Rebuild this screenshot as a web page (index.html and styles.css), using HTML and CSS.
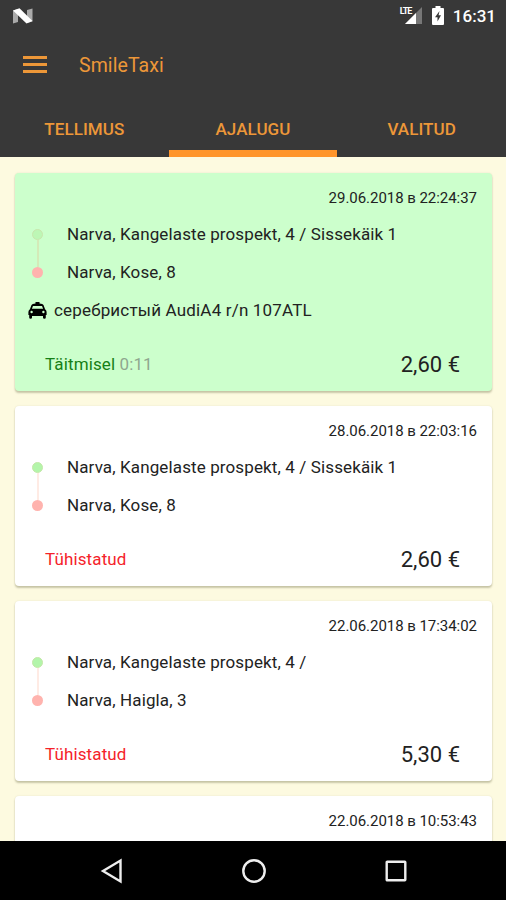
FILE: index.html
```html
<!DOCTYPE html>
<html lang="et">
<head>
<meta charset="utf-8">
<title>SmileTaxi</title>
<link rel="stylesheet" href="styles.css">
</head>
<body>
<div class="screen">
  <header class="header">
    <div class="status-bar">
      <svg class="nougat" width="20" height="16" viewBox="0 0 20 16"><path fill="#aaa" d="M0 2.500 5 1v13l-5 1.500zM14 2l5.500-1.500v13L14 15z"/><path fill="#fff" d="M0 2.500 6.500.3 19.500 13l-6 2.500z"/></svg>
      <div class="signal">
        <svg width="22" height="19" viewBox="0 0 22 19"><path fill="#777" d="M22 1v17H5z"/><path fill="#fff" d="M16 7v11H5z"/></svg>
        <span class="lte">LTE</span>
      </div>
      <svg class="battery" width="12" height="19" viewBox="0 0 12 19"><path fill="#fff" d="M3.500 0h5v2H11q1 0 1 1v15q0 1-1 1H1q-1 0-1-1V3q0-1 1-1h2.500z"/><path fill="#383838" d="M7.500 5 3 11.300h2.500V15.500L9 9.300H6.600z"/></svg>
      <span class="clock">16:31</span>
    </div>
    <div class="toolbar">
      <div class="menu"><i></i><i></i><i></i></div>
      <h1 class="title">SmileTaxi</h1>
    </div>
    <nav class="tabs">
      <span class="tab">TELLIMUS</span>
      <span class="tab active">AJALUGU</span>
      <span class="tab">VALITUD</span>
    </nav>
  </header>
  <main class="list">
    <article class="card current">
      <div class="date">29.06.2018 в 22:24:37</div>
      <div class="route">
        <div class="track"><i class="dot from"></i><i class="line"></i><i class="dot to"></i></div>
        <div class="stops"><div class="stop">Narva, Kangelaste prospekt, 4 / Sissekäik 1</div><div class="stop">Narva, Kose, 8</div></div>
      </div>
      <div class="car">
        <svg width="19" height="17" viewBox="0 0 19 17"><path fill="#000" fill-rule="evenodd" d="M7.500 0h4v1.500q3.500.2 4 1.500l1.600 4.300q1.500.9 1.500 2.700V13h-.8v2.500q0 1.200-1.400 1.200T15 15.500V14H4v1.500q0 1.200-1.400 1.200t-1.400-1.200V13H.4v-3q0-1.800 1.500-2.700L3.500 3q.5-1.300 4-1.500zM5 4 3.900 6.800h11.200L14 4zM3.600 8.800a1.200 1.200 0 1 0 0 2.400 1.200 1.200 0 1 0 0-2.400M15.400 8.800a1.200 1.200 0 1 0 0 2.400 1.200 1.200 0 1 0 0-2.400"/></svg>
        <span>серебристый AudiA4 r/n 107ATL</span>
      </div>
      <div class="summary"><span class="state running">Täitmisel <span class="timer">0:11</span></span><span class="price">2,60 €</span></div>
    </article>
    <article class="card">
      <div class="date">28.06.2018 в 22:03:16</div>
      <div class="route">
        <div class="track"><i class="dot from"></i><i class="line"></i><i class="dot to"></i></div>
        <div class="stops"><div class="stop">Narva, Kangelaste prospekt, 4 / Sissekäik 1</div><div class="stop">Narva, Kose, 8</div></div>
      </div>
      <div class="summary"><span class="state cancelled">Tühistatud</span><span class="price">2,60 €</span></div>
    </article>
    <article class="card">
      <div class="date">22.06.2018 в 17:34:02</div>
      <div class="route">
        <div class="track"><i class="dot from"></i><i class="line"></i><i class="dot to"></i></div>
        <div class="stops"><div class="stop">Narva, Kangelaste prospekt, 4 /</div><div class="stop">Narva, Haigla, 3</div></div>
      </div>
      <div class="summary"><span class="state cancelled">Tühistatud</span><span class="price">5,30 €</span></div>
    </article>
    <article class="card">
      <div class="date">22.06.2018 в 10:53:43</div>
    </article>
  </main>
  <footer class="navbar">
    <svg width="24" height="26" viewBox="0 0 24 26"><path d="M20.500 2.500v21L3 13z"/></svg>
    <svg width="26" height="26" viewBox="0 0 26 26"><circle cx="13" cy="13" r="10.700"/></svg>
    <svg width="24" height="26" viewBox="0 0 24 26"><rect x="2.700" y="3.700" width="18.600" height="18.600" rx=".5"/></svg>
  </footer>
</div>
</body>
</html>
```

FILE: styles.css
```css
* { box-sizing: border-box; }

body {
  margin: 0;
  font-family: Roboto, "Liberation Sans", sans-serif;
}

.screen {
  display: flex;
  flex-direction: column;
  width: 506px;
  height: 900px;
  overflow: hidden;
  background: #fdfae0;
}

.header {
  flex: none;
  height: 157px;
  background: #383838;
  color: #ed9738;
}

.status-bar {
  display: flex;
  align-items: center;
  height: 31px;
  padding: 0 10px 0 13px;
  color: #fff;
}

.signal {
  position: relative;
  height: 19px;
  margin-left: auto;
}

.lte {
  position: absolute;
  left: 0;
  top: 0;
  font-size: 9px;
  font-weight: 700;
  line-height: 10px;
  letter-spacing: -1px;
}

.battery { margin-left: 10px; }

.clock {
  margin-left: 9px;
  font-size: 17px;
  font-weight: 500;
}

.toolbar {
  display: flex;
  align-items: center;
  height: 69px;
  padding-left: 23px;
}

.menu {
  display: flex;
  flex-direction: column;
  gap: 4px;
  width: 24px;
  margin-top: -3px;
}

.menu i {
  height: 3px;
  background: #ed9738;
}

.title {
  margin: 0 0 0 32px;
  font-size: 19.500px;
  font-weight: 400;
  letter-spacing: .08px;
}

.tabs {
  display: grid;
  grid-template-columns: repeat(3, 1fr);
  height: 57px;
}

.tab {
  border-bottom: 7px solid transparent;
  font-size: 17px;
  font-weight: 500;
  letter-spacing: .08px;
  line-height: 58px;
  height: 57px;
  text-align: center;
}

.tab.active { border-color: #ff952b; }

.list {
  flex: 1;
  display: flex;
  flex-direction: column;
  gap: 14.900px;
  min-height: 0;
  padding: 16px 14px 0 15px;
  overflow: hidden;
}

.card {
  flex: none;
  height: 180px;
  border-radius: 4px;
  background: #fff;
  box-shadow: 0 2px 2px rgba(70, 70, 30, .28), 0 0 2px rgba(70, 70, 30, .12);
  color: #222;
}

.card.current {
  height: 218px;
  background: #cfc;
}

.date {
  height: 43px;
  padding: 16px 15px 0 0;
  font-size: 15px;
  letter-spacing: -.04px;
  line-height: 18px;
  text-align: right;
}

.route {
  display: flex;
  height: 76px;
  padding-left: 17px;
}

.track {
  display: flex;
  flex-direction: column;
  align-items: center;
  width: 11px;
  margin: 13px 24px 14px 0;
}

.dot {
  flex: none;
  width: 11px;
  height: 11px;
  border-radius: 50%;
}

.from {
  border: 1px solid #c4e8a8;
  background: #b3f5aa;
}

.current .from {
  border: 1.500px solid #c9e6ad;
  background: #bdf7b5;
}

.to { background: #ffb3ae; }

.line {
  flex: 1;
  width: 2px;
  background: #ffebe4;
}

.current .line { background: #d4eab8; }

.stops { margin-top: -1px; }

.stop,
.car,
.state {
  font-size: 17px;
  letter-spacing: .12px;
  line-height: 38px;
  white-space: nowrap;
}

.car {
  display: flex;
  align-items: center;
  gap: 7px;
  height: 38px;
  margin-top: -1px;
  padding-left: 13px;
}

.car span { letter-spacing: .18px; }

.summary {
  display: flex;
  justify-content: space-between;
  align-items: center;
  height: 61px;
  padding: 8px 32px 0 30px;
}

.state { margin-top: -1px; }
.current .state { margin-top: 0; }
.current .price { margin-top: 2px; }

.running { color: #168016; }
.timer { color: #8fa78f; }
.cancelled { color: #f5222a; }

.price { font-size: 22px; }

.navbar {
  flex: none;
  display: flex;
  align-items: center;
  justify-content: space-between;
  height: 59px;
  padding: 1px 98px 0 100px;
  background: #000;
}

.navbar svg {
  fill: none;
  stroke: #eee;
  stroke-width: 2.400;
}
```
